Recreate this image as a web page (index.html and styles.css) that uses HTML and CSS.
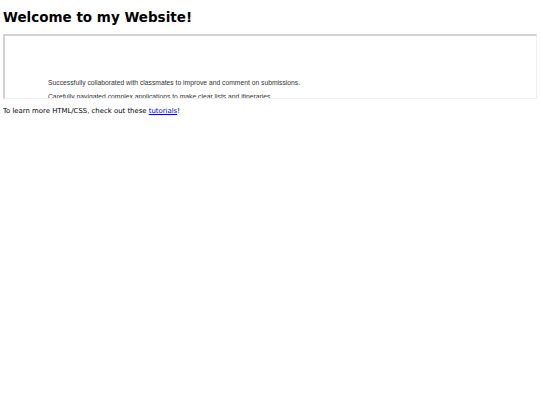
FILE: index.html
```html
<!DOCTYPE html>
<html lang="en">
<head>
<meta charset="utf-8">
<title>Welcome to my Website!</title>
<link rel="stylesheet" href="styles.css">
</head>
<body>
<h1 class="title">Welcome to my Website!</h1>
<div class="frame">
  <div class="frame-content">
    <p class="item">Successfully collaborated with classmates to improve and comment on submissions.</p>
    <p class="item">Carefully navigated complex applications to make clear lists and itineraries.</p>
    <p class="item">Organized weekly study sessions and shared notes with peers.</p>
  </div>
</div>
<p class="note">To learn more HTML/CSS, check out these <a class="link" href="#">tutorials</a>!</p>
</body>
</html>
```
FILE: styles.css
```css
html, body {
  background: #ffffff;
}
body {
  margin: 3px;
  font-family: "DejaVu Sans", sans-serif;
  color: #000;
}
.title {
  font-size: 13.5px;
  font-weight: bold;
  margin: 6px 0 9px 0;
  line-height: 16px;
}
.frame {
  height: 62px;
  border-style: solid;
  border-width: 2px 1px 1px 2px;
  border-color: #d2d2d2 #efefef #efefef #d2d2d2;
  overflow: hidden;
  box-sizing: content-box;
}
.frame-content {
  padding: 40px 0 0 43px;
  font-family: "Liberation Sans", Arial, sans-serif;
  font-size: 6.75px;
  color: #333;
}
.item {
  margin: 0;
  line-height: 14px;
}
.note {
  font-size: 6.9px;
  margin: 7px 0;
  line-height: 10px;
}
.link {
  color: #0000ee;
  text-decoration: underline;
}
```
